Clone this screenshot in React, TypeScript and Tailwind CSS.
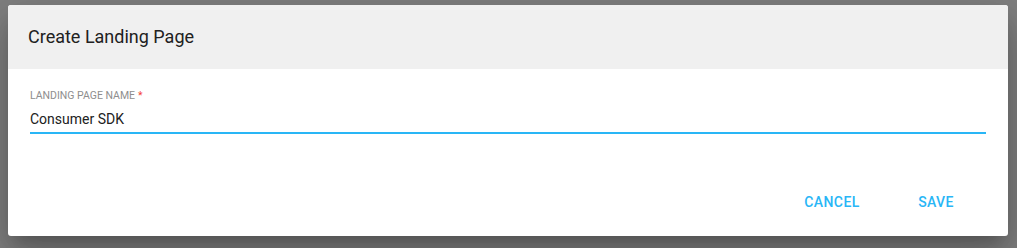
import { useState } from 'react'

// Create Landing Page dialog — grey header strip, one underlined text field,
// and a right-aligned row of flat text actions.

const BLUE = 'text-[#29b6f6]'

export default function App() {
  const [name] = useState('Consumer SDK')

  return (
    <div className="h-[248px] w-full overflow-hidden bg-[#808080] pl-[8px] pt-[5px] font-['Roboto',sans-serif]">
      <div className="flex h-[231px] w-[1000px] flex-col overflow-hidden rounded-[3px] bg-white shadow-[0_11px_15px_-7px_rgba(0,0,0,0.2),0_24px_38px_3px_rgba(0,0,0,0.14),0_9px_46px_8px_rgba(0,0,0,0.12)]">
        {/* Header */}
        <div className="flex h-[64px] items-center bg-[#f0f0f0] pl-[20px]">
          <h2 className="text-[18px] leading-[64px] font-normal text-[#212121]">
            Create Landing Page
          </h2>
        </div>

        {/* Body */}
        <div className="px-[22px] pt-[20px]">
          <label className="block text-[10.5px] leading-[13px] text-[#8e8e8e] uppercase">
            Landing Page Name
            <span className="ml-[3px] text-[#f44336]">*</span>
          </label>
          <div className="mt-[5px] border-b-2 border-[#29b6f6] pb-[1px]">
            <div className="text-[14px] leading-[24px] text-[#212121]">{name}</div>
          </div>
        </div>

        {/* Actions */}
        <div className="mt-auto flex items-center justify-end gap-[16px] pr-[28px] pb-[16px]">
          <button
            type="button"
            className={`flex h-[36px] w-[88px] items-center justify-center text-[14px] font-medium tracking-[0.4px] uppercase ${BLUE}`}
          >
            Cancel
          </button>
          <button
            type="button"
            className={`flex h-[36px] w-[88px] items-center justify-center text-[14px] font-medium tracking-[0.4px] uppercase ${BLUE}`}
          >
            Save
          </button>
        </div>
      </div>
    </div>
  )
}
